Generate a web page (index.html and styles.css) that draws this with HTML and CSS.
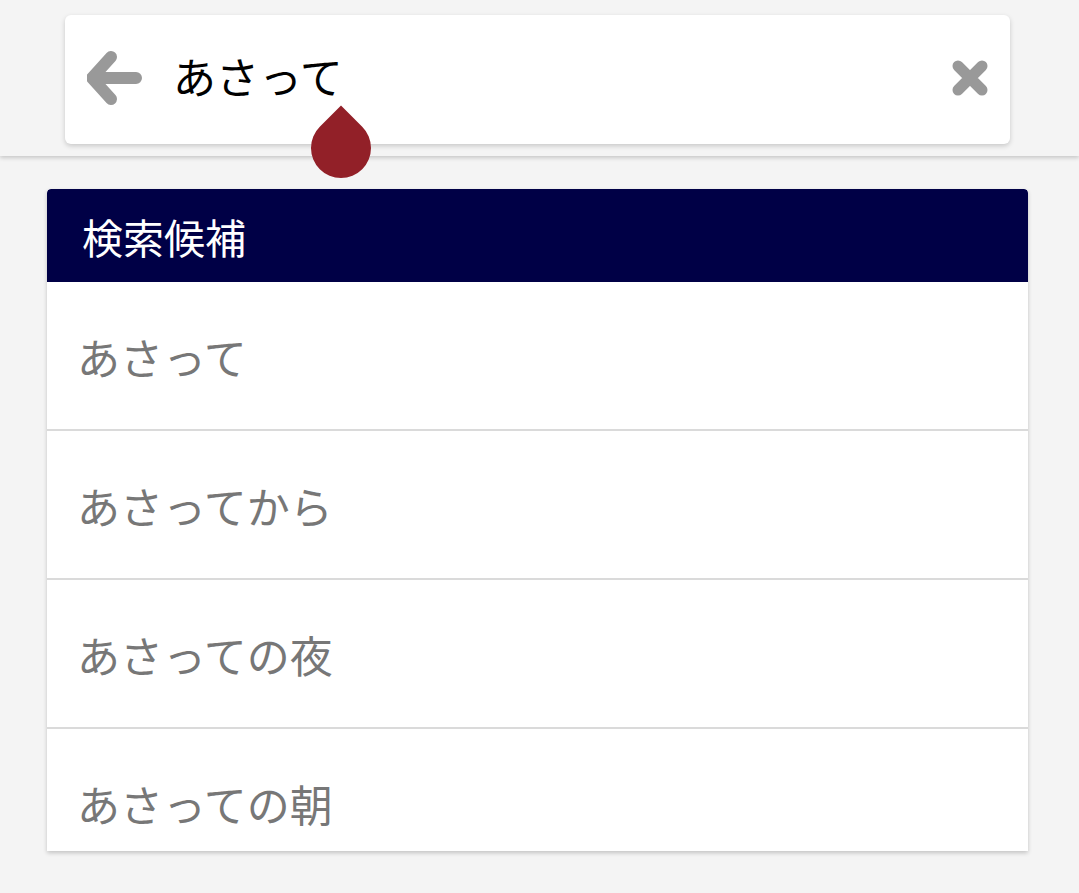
FILE: index.html
```html
<!DOCTYPE html>
<html lang="ja">
<head>
  <meta charset="UTF-8" />
  <meta name="viewport" content="width=device-width, initial-scale=1.0"/>
  <title>検索</title>
  <link rel="stylesheet" href="styles.css">
</head>
<body>
  <header class="topbar">
    <div class="search-box">
      <button class="icon-btn back" aria-label="戻る">
        <svg width="56" height="56" viewBox="0 0 56 56">
          <path d="M24 6 L5 27 L24 48 M7 27 L49 27" fill="none" stroke="#999" stroke-width="12" stroke-linecap="round" stroke-linejoin="round"/>
        </svg>
      </button>
      <div class="query">あさって</div>
      <button class="icon-btn clear" aria-label="クリア">
        <svg width="40" height="40" viewBox="0 0 40 40">
          <path d="M8 8 L32 32 M32 8 L8 32" fill="none" stroke="#999" stroke-width="11" stroke-linecap="round"/>
        </svg>
      </button>
    </div>
    <div class="caret-handle"></div>
  </header>

  <section class="suggest">
    <h2 class="suggest-title">検索候補</h2>
    <ul class="suggest-list">
      <li>あさって</li>
      <li>あさってから</li>
      <li>あさっての夜</li>
      <li>あさっての朝</li>
    </ul>
  </section>
</body>
</html>
```

FILE: styles.css
```css
* {
  margin: 0;
  padding: 0;
  box-sizing: border-box;
  font-family: "Noto Sans CJK JP", "Noto Sans", sans-serif;
}

body {
  background: #f4f4f4;
  width: 1079px;
  height: 893px;
  overflow: hidden;
}

.topbar {
  position: relative;
  height: 156px;
  padding: 15px 69px 0 65px;
  background: #f4f4f4;
  box-shadow: 0 2px 4px rgba(0, 0, 0, 0.18);
}

.search-box {
  height: 129px;
  background: #fff;
  border-radius: 6px;
  box-shadow: 0 2px 5px rgba(0, 0, 0, 0.18);
  display: flex;
  align-items: center;
  padding: 0 20px 0 22px;
}

.icon-btn {
  border: none;
  background: none;
  display: flex;
  align-items: center;
  justify-content: center;
}

.back {
  width: 56px;
  height: 56px;
  margin-top: -1px;
}

.query {
  flex: 1;
  margin-left: 30px;
  font-size: 43px;
  color: #000;
  line-height: 1;
  margin-top: -8px;
}

.clear {
  width: 40px;
  height: 40px;
  margin-top: -3px;
}

/* text cursor handle */
.caret-handle {
  position: absolute;
  left: 311px;
  top: 118px;
  width: 60px;
  height: 60px;
  background: #922028;
  border-radius: 0 50% 50% 50%;
  transform: rotate(45deg);
}

.suggest {
  width: 981px;
  height: 662px;
  margin: 33px 0 0 47px;
  background: #fff;
  border-radius: 4px 4px 0 0;
  box-shadow: 0 2px 4px rgba(0, 0, 0, 0.2);
  overflow: hidden;
}

.suggest-title {
  height: 93px;
  background: #000046;
  color: #fff;
  font-size: 41px;
  font-weight: normal;
  display: flex;
  align-items: center;
  padding-left: 35px;
  border-radius: 4px 4px 0 0;
}

.suggest-list {
  list-style: none;
}

.suggest-list li {
  height: 149px;
  border-bottom: 2px solid #dadada;
  display: flex;
  align-items: center;
  padding-left: 30px;
  font-size: 43px;
  color: #777;
}
```
